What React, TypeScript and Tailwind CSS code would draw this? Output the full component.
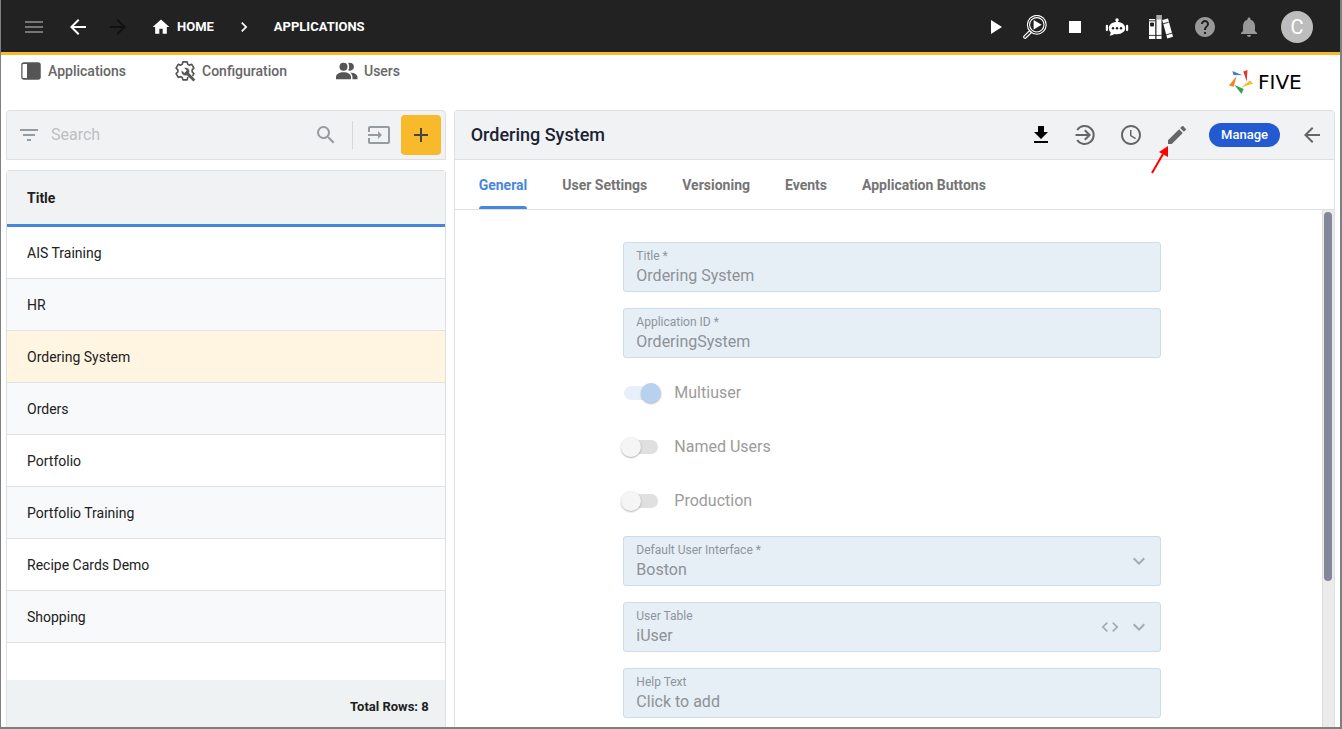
import type { ReactNode } from "react";
import clsx from "clsx";
import {
  MdAccessTime,
  MdAdd,
  MdArrowBack,
  MdArrowForward,
  MdChevronRight,
  MdCode,
  MdEdit,
  MdFilterList,
  MdHelp,
  MdHome,
  MdInput,
  MdKeyboardArrowDown,
  MdMenu,
  MdNotifications,
  MdPlayArrow,
  MdSearch,
  MdStop,
} from "react-icons/md";

const applications = [
  "AIS Training",
  "HR",
  "Ordering System",
  "Orders",
  "Portfolio",
  "Portfolio Training",
  "Recipe Cards Demo",
  "Shopping",
];

const tabs = ["General", "User Settings", "Versioning", "Events", "Application Buttons"];

function InspectIcon() {
  return (
    <svg viewBox="0 0 24 24" className="size-6" fill="none" stroke="currentColor">
      <circle cx="13.8" cy="9.8" r="9.4" strokeWidth="1.1" />
      <circle cx="13.8" cy="9.8" r="7.2" strokeWidth="1.1" />
      <path d="M10.6 5v9.6l8-4.8z" fill="currentColor" stroke="none" />
      <path d="M6.6 15.600l1.900 1.900-5.600 5.500c-1.200.8-2.800-.6-1.900-1.900z" strokeWidth="1.200" />
    </svg>
  );
}

function RobotIcon() {
  return (
    <svg viewBox="0 0 24 20" className="w-6 h-5" fill="currentColor">
      <circle cx="12" cy="3" r="1.700" />
      <path d="M11.200 4h1.600v3h-1.600z" />
      <path d="M12 5c5 0 8.200 2.600 8.200 6.100s-3.200 6.100-8.200 6.100c-1 0-1.900-.1-2.700-.3-1.300 1-3 1.600-5 1.700.9-.9 1.400-1.900 1.400-3.100-1.200-1.200-1.900-2.700-1.900-4.400C3.800 7.600 7 5 12 5z" />
      <rect x=".8" y="7.800" width="2.200" height="6.400" rx="1.100" />
      <rect x="21" y="7.800" width="2.200" height="6.400" rx="1.100" />
      <g fill="#222222">
        <circle cx="8" cy="11.200" r="1.200" />
        <circle cx="12" cy="11.200" r="1.200" />
        <circle cx="16" cy="11.200" r="1.200" />
      </g>
    </svg>
  );
}

function BooksIcon() {
  return (
    <svg viewBox="0 0 24 24" className="size-6" fill="currentColor">
      <path d="M0 4h6.500v20H0z" />
      <path d="M7.200 0h5.300v24H7.200z" />
      <path d="M7.200 0h5.300v4.500H7.200z" fill="#aaaaaa" />
      <path d="M13.200 5l5.800-1.500L24 21.800 18.300 23.500z" />
      <g stroke="#222222" strokeWidth=".9" fill="none">
        <path d="M0 5.800h6.500M0 20.400h12.500M14 8.800l5.600-1.500M17.200 19.800l5.800-1.600" />
        <path d="M1.500 8h3v3h-3z" fill="#222222" />
        <path d="M6.900 0v24" />
      </g>
    </svg>
  );
}

function SidebarIcon() {
  return (
    <svg viewBox="0 0 20 18" className="w-5 h-[18px]">
      <rect x="1" y="1" width="18" height="16" rx="2" fill="#555555" stroke="#555555" strokeWidth="1.500" />
      <path d="M2.500 2H6v14H2.500a1 1 0 0 1-1-1V3a1 1 0 0 1 1-1z" fill="#ffffff" />
    </svg>
  );
}

function GearWrenchIcon() {
  return (
    <svg viewBox="0 0 24 24" className="size-[22px]" fill="none">
      <path
        d="M9.700 2h4.600l.7 2.600 1.700 1 2.700-.8 2.300 4-1.900 1.900v2.300l1.900 1.900-2.300 4-2.700-.8-1.700 1-.7 2.600H9.700L9 19.100l-1.700-1-2.700.8-2.300-4L4.200 13v-2.300L2.300 8.800l2.300-4 2.700.8 1.700-1z"
        stroke="#555555"
        strokeWidth="1.800"
        strokeLinejoin="round"
      />
      <path
        d="M23 20.800l-6.200-6.500c.6-1.700.2-3.600-1.100-4.900-1.400-1.400-3.300-1.700-5-.9l2.900 3-2.300 2.300-3-2.900c-.8 1.700-.4 3.600 1 5 1.300 1.300 3.100 1.700 4.800 1.100l6.400 6.200c.4.400.9.400 1.300 0l1.200-1.200c.4-.4.400-.9 0-1.200z"
        fill="#555555"
        stroke="#ffffff"
        strokeWidth=".7"
      />
    </svg>
  );
}

function PeopleIcon() {
  return (
    <svg viewBox="0 0 22 18" className="w-[22px] h-[18px]" fill="#555555">
      <circle cx="7.500" cy="4.700" r="4" />
      <path d="M0 17.300v-2C0 12 3.400 10.300 7.500 10.300S15 12 15 15.300v2z" />
      <path d="M12.200 1.100a4 4 0 1 1 0 7.200c1.300-2 1.300-5.200 0-7.200z" />
      <path d="M14.300 10.400c4 .2 7.200 1.900 7.200 4.900v2h-5v-2c0-2-.8-3.700-2.200-4.900z" />
    </svg>
  );
}

function DownloadIcon() {
  return (
    <svg viewBox="0 0 20 24" className="w-5 h-6" fill="#000000">
      <path d="M7 3h6v6h4l-7 7-7-7h4zM3 18h14v2H3z" />
    </svg>
  );
}

function EnterIcon() {
  return (
    <svg viewBox="0 0 24 24" className="size-6" fill="none" stroke="currentColor" strokeWidth="2">
      <path d="M4.200 7a9 9 0 1 1 0 10" />
      <path d="M2.500 12H16M11.800 7.200l4.800 4.800-4.800 4.800" />
    </svg>
  );
}

function FiveLogo() {
  return (
    <a href="#" className="flex items-center gap-[5px] text-black">
      <svg viewBox="0 0 24 24" className="size-6">
        <path d="M3.500 1l.8 4 9.200.2z" fill="#3f7fd6" />
        <path d="M14.300 1.500L18.500 0l-.8 11.500z" fill="#e5322d" />
        <path d="M0 15.500l4.700 1.200L7.600 6z" fill="#f58220" />
        <path d="M12 17.500l9-7 3 3z" fill="#f9b928" />
        <path d="M5.500 15l9.200 4-2.200 5z" fill="#2fa44f" />
      </svg>
      <span className="w-[59px] font-['DejaVu_Sans',sans-serif] text-xl leading-6">FIVE</span>
    </a>
  );
}

function IconButton({ label, className, children }: { label: string; className?: string; children: ReactNode }) {
  return (
    <button type="button" aria-label={label} className={clsx("flex h-8 items-center justify-center shrink-0", className)}>
      {children}
    </button>
  );
}

function TopBar() {
  return (
    <header className="flex h-[55px] shrink-0 items-center justify-between border-b-[3px] border-[#f9b928] bg-[#222222] pt-0.5 pl-[21px] pr-[27px] text-white">
      <div className="flex items-center">
        <IconButton label="Menu" className="w-6 text-[#757575]">
          <MdMenu className="size-6" />
        </IconButton>
        <IconButton label="Back" className="ml-5 w-6">
          <MdArrowBack className="size-6" />
        </IconButton>
        <IconButton label="Forward" className="ml-4 w-6 text-[#111111]">
          <MdArrowForward className="size-6" />
        </IconButton>
        <nav className="ml-[21px] flex items-center text-[13px] font-bold">
          <a href="#" className="flex items-center gap-1.5">
            <MdHome className="size-5" />
            HOME
          </a>
          <MdChevronRight className="mx-5 size-5" />
          <a href="#">APPLICATIONS</a>
        </nav>
      </div>
      <div className="flex items-center gap-4">
        <IconButton label="Run" className="w-6">
          <MdPlayArrow className="size-6" />
        </IconButton>
        <IconButton label="Inspect" className="w-6">
          <InspectIcon />
        </IconButton>
        <IconButton label="Stop" className="w-6">
          <MdStop className="size-6" />
        </IconButton>
        <IconButton label="Assistant" className="w-7">
          <RobotIcon />
        </IconButton>
        <IconButton label="Library" className="w-7">
          <BooksIcon />
        </IconButton>
        <IconButton label="Help" className="w-7 text-[#999999]">
          <MdHelp className="size-6" />
        </IconButton>
        <IconButton label="Notifications" className="w-7 text-[#999999]">
          <MdNotifications className="size-6" />
        </IconButton>
        <button type="button" className="ml-0.5 size-8 rounded-full bg-[#bdbdbd] text-xl leading-8">
          C
        </button>
      </div>
    </header>
  );
}

function MainNav() {
  return (
    <div className="flex h-[55px] shrink-0 items-start justify-between pl-5 pr-[23px]">
      <nav className="flex h-8 items-center text-sm font-medium text-[#666666]">
        <a href="#" className="flex w-[153px] items-center gap-[7px]">
          <SidebarIcon />
          Applications
        </a>
        <a href="#" className="flex w-[162px] items-center gap-1.5">
          <GearWrenchIcon />
          Configuration
        </a>
        <a href="#" className="flex items-center gap-1.5">
          <PeopleIcon />
          Users
        </a>
      </nav>
      <div className="pt-[15px]">
        <FiveLogo />
      </div>
    </div>
  );
}

function ApplicationList() {
  return (
    <section className="flex min-w-0 flex-[1] flex-col gap-2.5">
      <div className="flex h-[50px] shrink-0 items-center rounded-t border border-[#dfe0e2] bg-[#f1f2f4] pl-2.5 pr-1 text-[#949ca2]">
        <IconButton label="Filter" className="w-6">
          <MdFilterList className="size-6" />
        </IconButton>
        <input
          type="search"
          aria-label="Search"
          placeholder="Search"
          className="ml-2.5 min-w-0 flex-1 bg-transparent text-base outline-none placeholder:text-[#bdbfc1]"
        />
        <IconButton label="Search" className="w-6">
          <MdSearch className="size-6" />
        </IconButton>
        <div className="ml-3.5 h-7 w-px bg-[#d5d7d9]" />
        <IconButton label="Import" className="ml-3.5 w-6">
          <MdInput className="size-6" />
        </IconButton>
        <button
          type="button"
          aria-label="Add"
          className="ml-2.5 flex size-10 items-center justify-center rounded bg-[#f8b92b] text-[#444444]"
        >
          <MdAdd className="size-6" />
        </button>
      </div>
      <div className="flex min-h-0 flex-1 flex-col rounded-t border border-b-0 border-[#dfe0e2]">
        <table className="w-full border-separate border-spacing-0 text-left text-sm text-[#212121]">
          <thead>
            <tr>
              <th className="h-14 border-b-[3px] border-[#4687dd] bg-[#f1f2f4] px-5 font-bold">Title</th>
            </tr>
          </thead>
          <tbody>
            {applications.map((name) => (
              <tr key={name} className={name === "Ordering System" ? "bg-[#fff5e1]" : "even:bg-[#f8f9fb]"}>
                <td className="h-[52px] border-b border-[#e0e2e4] px-5">{name}</td>
              </tr>
            ))}
          </tbody>
        </table>
        <div className="mt-auto flex h-[47px] shrink-0 items-center justify-end bg-[#eef2f3] px-4 pt-1.5 text-[13px] font-bold text-[#212121]">
          Total Rows: 8
        </div>
      </div>
    </section>
  );
}

const fieldBox =
  "flex h-[50px] flex-col rounded-[3px] border border-[#cbdcec] bg-[#e6eef6] px-3 pt-[5px]";
const fieldLabel = "text-xs leading-4 text-[#8d959c]";
const fieldValue = "h-6 w-full appearance-none bg-transparent text-base leading-6 text-[#8d9297]";

function TextField({ id, label, value }: { id: string; label: string; value: string }) {
  return (
    <div className={fieldBox}>
      <label htmlFor={id} className={fieldLabel}>
        {label}
      </label>
      <input id={id} type="text" defaultValue={value} disabled className={fieldValue} />
    </div>
  );
}

function SelectField({ id, label, value, code }: { id: string; label: string; value: string; code?: boolean }) {
  return (
    <div className={clsx(fieldBox, "relative")}>
      <label htmlFor={id} className={fieldLabel}>
        {label}
      </label>
      <select id={id} disabled className={clsx(fieldValue, "opacity-100")}>
        <option>{value}</option>
      </select>
      <div className="pointer-events-none absolute inset-y-0 right-[9px] flex items-center gap-[7px] text-[#a3abb2]">
        {code && <MdCode className="size-5" />}
        <MdKeyboardArrowDown className="size-6" />
      </div>
    </div>
  );
}

function Toggle({ label, checked }: { label: string; checked?: boolean }) {
  return (
    <label className="flex h-[38px] items-center text-base text-[#9b9b9b]">
      <span className="relative block h-6 w-[51px]">
        <input type="checkbox" role="switch" defaultChecked={checked} disabled className="peer sr-only" />
        <span className="absolute left-px top-[5px] h-3.5 w-[34px] rounded-full bg-[#e0e0e0] peer-checked:bg-[#e7f0fa]" />
        <span className="absolute -left-0.5 top-0.5 size-5 rounded-full bg-[#f5f5f5] shadow-[0_1px_2px_rgba(0,0,0,0.3)] peer-checked:left-[18px] peer-checked:bg-[#b9d1f0]" />
      </span>
      {label}
    </label>
  );
}

function ApplicationDetail() {
  return (
    <section className="flex min-w-0 flex-[2] flex-col rounded-t border border-b-0 border-[#dfe0e2]">
      <div className="relative flex h-[49px] shrink-0 items-center justify-between border-b border-[#dfe0e2] bg-[#f1f2f4] pl-4 pr-2.5">
        <h1 className="text-lg font-medium text-[#1b2233]">Ordering System</h1>
        <div className="flex items-center gap-5 text-[#666666]">
          <div className="flex items-center gap-[22px]">
            <IconButton label="Download">
              <DownloadIcon />
            </IconButton>
            <IconButton label="Open">
              <EnterIcon />
            </IconButton>
            <IconButton label="History">
              <MdAccessTime className="size-6" />
            </IconButton>
            <IconButton label="Edit">
              <MdEdit className="size-6" />
            </IconButton>
          </div>
          <button type="button" className="h-6 rounded-full bg-[#235ad1] px-3 text-[13px] font-medium text-white">
            Manage
          </button>
          <IconButton label="Close">
            <MdArrowBack className="size-6" />
          </IconButton>
        </div>
        <svg viewBox="0 0 18 28" className="absolute right-[165px] top-[35px] h-7 w-[18px]">
          <path d="M1 27L12 8" stroke="#ff0000" strokeWidth="2" />
          <path d="M17 0v11L8 6z" fill="#ff0000" />
        </svg>
      </div>
      <div role="tablist" className="flex h-[50px] shrink-0 gap-[35px] border-b border-[#dfe0e2] px-6 text-sm font-bold text-[#757575]">
        {tabs.map((tab, i) => (
          <button
            key={tab}
            type="button"
            role="tab"
            aria-selected={i === 0}
            className={clsx("relative h-[49px]", i === 0 && "text-[#4687dd]")}
          >
            {tab}
            {i === 0 && <span className="absolute inset-x-0 bottom-0 h-[3px] rounded-t-sm bg-[#4687dd]" />}
          </button>
        ))}
      </div>
      <div className="flex min-h-0 flex-1">
        <div className="min-w-0 flex-1 overflow-hidden pl-2 pt-8">
          <form className="mx-auto flex max-w-[538px] flex-col gap-4">
            <TextField id="title" label="Title *" value="Ordering System" />
            <TextField id="application-id" label="Application ID *" value="OrderingSystem" />
            <Toggle label="Multiuser" checked />
            <Toggle label="Named Users" />
            <Toggle label="Production" />
            <SelectField id="default-ui" label="Default User Interface *" value="Boston" />
            <SelectField id="user-table" label="User Table" value="iUser" code />
            <TextField id="help-text" label="Help Text" value="Click to add" />
          </form>
        </div>
        <div className="w-3 border-l border-[#dcdcdc] bg-[#ebebeb] pr-px pt-0.5">
          <div className="mx-auto h-[369px] w-2 rounded-full bg-[#828899]" />
        </div>
      </div>
    </section>
  );
}

export default function App() {
  return (
    <div className="flex h-screen flex-col overflow-hidden border-b-2 border-l border-r-2 border-[#7f7f7f] bg-white font-[Roboto,sans-serif]">
      <TopBar />
      <MainNav />
      <main className="flex min-h-0 flex-1 gap-2 pl-[5px] pr-[5px]">
        <ApplicationList />
        <ApplicationDetail />
      </main>
    </div>
  );
}
